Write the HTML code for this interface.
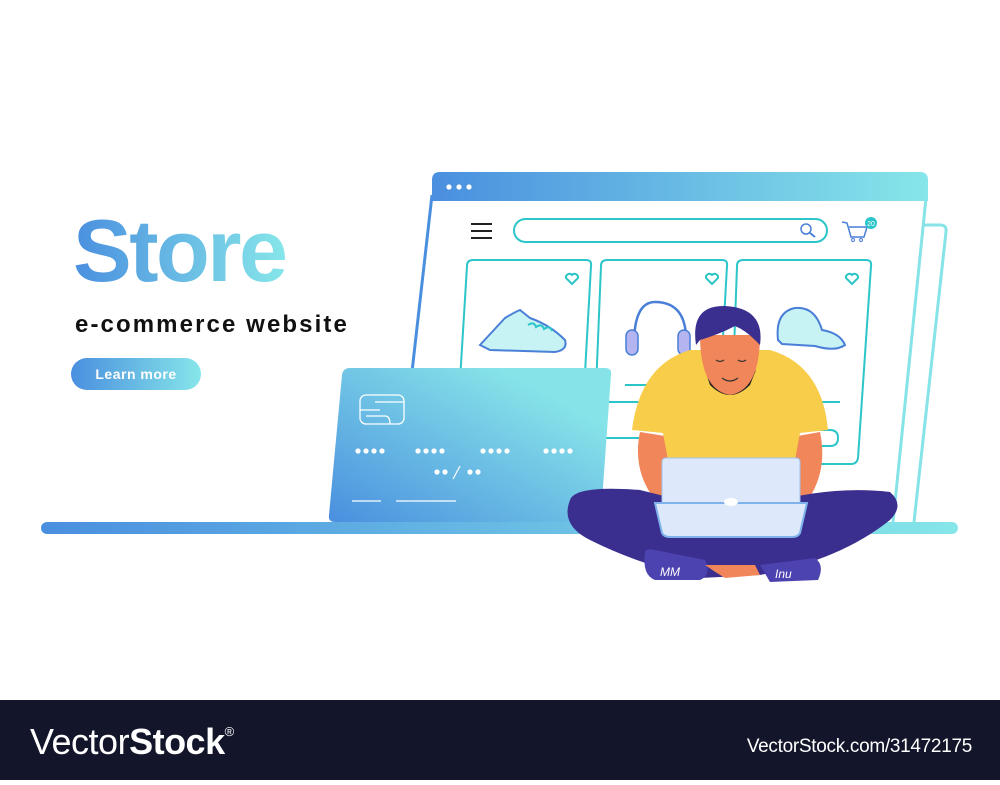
<!DOCTYPE html>
<html><head><style>
body{margin:0;width:1000px;height:780px;overflow:hidden;background:#fff;font-family:"Liberation Sans",sans-serif}
</style></head><body>
<svg width="1000" height="780" viewBox="0 0 1000 780" xmlns="http://www.w3.org/2000/svg">
<defs>
<linearGradient id="g1" x1="0" x2="1" y1="0" y2="0"><stop offset="0" stop-color="#4a8fdf"/><stop offset="1" stop-color="#86e6e9"/></linearGradient>
<linearGradient id="g2" x1="0" x2="1" y1="1" y2="0"><stop offset="0" stop-color="#4a8fdf"/><stop offset="0.8" stop-color="#86e3e8"/></linearGradient>
</defs>
<path d="M900 225 L940 225 Q947 225 946 232 L914 522" fill="#fff" stroke="#86e3e8" stroke-width="3"/>
<polygon points="432,200 926,200 893,522 396,522" fill="#fff"/>
<line x1="432" y1="195" x2="395" y2="522" stroke="#4a8fdf" stroke-width="3"/>
<line x1="926" y1="198" x2="893" y2="522" stroke="#86e3e8" stroke-width="3"/>
<path d="M440 172 H920 Q928 172 928 180 V201 H432 V180 Q432 172 440 172Z" fill="url(#g1)"/>
<circle cx="449" cy="187" r="2.6" fill="#fff"/><circle cx="459" cy="187" r="2.6" fill="#fff"/><circle cx="469" cy="187" r="2.6" fill="#fff"/>
<g stroke="#222" stroke-width="2"><line x1="471" y1="224" x2="492" y2="224"/><line x1="471" y1="231" x2="492" y2="231"/><line x1="471" y1="238" x2="492" y2="238"/></g>
<rect x="514" y="219" width="313" height="23" rx="11.5" fill="none" stroke="#2cc5c9" stroke-width="2"/>
<circle cx="806" cy="229" r="5" fill="none" stroke="#4a7fd8" stroke-width="1.5"/><line x1="810" y1="233" x2="815" y2="237" stroke="#4a7fd8" stroke-width="2"/>
<path d="M842 222 L847 223 L851 237 H864 L867 227 H849" fill="none" stroke="#4a7fd8" stroke-width="1.5"/>
<circle cx="853" cy="240" r="1.5" fill="none" stroke="#4a7fd8"/><circle cx="861" cy="240" r="1.5" fill="none" stroke="#4a7fd8"/>
<circle cx="871" cy="223" r="6" fill="#2cc5c9"/><text x="871" y="226" font-size="7" fill="#fff" text-anchor="middle">20</text>
<g fill="none" stroke="#2cc5c9" stroke-width="2">
<path d="M455 462 L467 266 Q467 260 473 260 H586 Q592 260 591 266 L580 462"/>
<path d="M593 462 L601 266 Q601 260 607 260 H722 Q728 260 727 266 L716 462"/>
<path d="M730 462 L737 266 Q737 260 743 260 H866 Q872 260 871 266 L858 458 Q857 464 851 464 H735"/>
<line x1="625" y1="385" x2="700" y2="385"/><line x1="760" y1="385" x2="812" y2="385"/>
<line x1="600" y1="402" x2="700" y2="402"/><line x1="760" y1="402" x2="840" y2="402"/>
<line x1="598" y1="438" x2="640" y2="438"/><path d="M820 430 h10 q8 0 8 8 q0 8 -8 8 h-10"/>
<path d="M572 284 l-6 -6 a3.5 3.5 0 0 1 6 -3 a3.5 3.5 0 0 1 6 3z"/>
<path d="M712 284 l-6 -6 a3.5 3.5 0 0 1 6 -3 a3.5 3.5 0 0 1 6 3z"/>
<path d="M852 284 l-6 -6 a3.5 3.5 0 0 1 6 -3 a3.5 3.5 0 0 1 6 3z"/>
</g>
<path d="M480 345 L505 318 Q515 312 520 310 L530 318 Q550 325 565 340 Q568 350 555 352 L490 350 Z" fill="#c8f3f5" stroke="#4a7fd8" stroke-width="2"/>
<path d="M528 325 q6 -4 8 2 q6 -4 8 2 q6 -4 8 2" fill="none" stroke="#2cc5c9" stroke-width="2"/>
<path d="M634 345 Q634 302 655 302 Q688 302 686 345" fill="none" stroke="#4a7fd8" stroke-width="2.5"/>
<rect x="626" y="330" width="12" height="25" rx="6" fill="#b3b4f0" stroke="#4a7fd8" stroke-width="1.5"/>
<rect x="678" y="330" width="12" height="25" rx="6" fill="#b3b4f0" stroke="#4a7fd8" stroke-width="1.5"/>
<path d="M778 340 Q775 312 795 308 Q815 306 822 330 Q840 333 845 345 Q835 352 815 346 L782 344 Z" fill="#c8f3f5" stroke="#4a7fd8" stroke-width="2"/>
<rect x="41" y="522" width="917" height="12" rx="6" fill="url(#g1)"/>
<path d="M350 368 H605 Q612 368 611 375 L601 515 Q600 522 593 522 H335 Q328 522 329 515 L342 375 Q343 368 350 368Z" fill="url(#g2)"/>
<rect x="360" y="395" width="44" height="29" rx="6" fill="none" stroke="#fff" stroke-width="1.3"/>
<path d="M360 410 H380 M375 402 H404 M366 416 H385 Q390 416 390 424" fill="none" stroke="#fff" stroke-width="1.3"/>
<g fill="#fff">
<circle cx="358" cy="451" r="2.6"/><circle cx="366" cy="451" r="2.6"/><circle cx="374" cy="451" r="2.6"/><circle cx="382" cy="451" r="2.6"/>
<circle cx="418" cy="451" r="2.6"/><circle cx="426" cy="451" r="2.6"/><circle cx="434" cy="451" r="2.6"/><circle cx="442" cy="451" r="2.6"/>
<circle cx="483" cy="451" r="2.6"/><circle cx="491" cy="451" r="2.6"/><circle cx="499" cy="451" r="2.6"/><circle cx="507" cy="451" r="2.6"/>
<circle cx="546" cy="451" r="2.6"/><circle cx="554" cy="451" r="2.6"/><circle cx="562" cy="451" r="2.6"/><circle cx="570" cy="451" r="2.6"/>
<circle cx="437" cy="472" r="2.6"/><circle cx="445" cy="472" r="2.6"/><circle cx="470" cy="472" r="2.6"/><circle cx="478" cy="472" r="2.6"/>
</g>
<line x1="453" y1="479" x2="460" y2="466" stroke="#fff" stroke-width="1.2"/>
<g stroke="#fff" stroke-width="1.3"><line x1="352" y1="501" x2="381" y2="501"/><line x1="396" y1="501" x2="456" y2="501"/></g>
<path d="M640 432 Q632 470 655 500 L690 500 L690 440Z" fill="#f0865a"/>
<path d="M820 432 Q828 470 808 500 L775 500 L775 440Z" fill="#f0865a"/>
<path d="M632 430 Q640 365 690 350 L770 350 Q822 365 828 430 L800 433 L795 460 H668 L663 433Z" fill="#f8cd4a"/>
<path d="M570 500 Q575 485 640 490 L700 505 L760 505 Q830 485 890 492 Q905 505 890 520 Q840 560 760 575 L700 578 Q640 565 590 540 Q560 525 570 500Z" fill="#3a2e8f"/>
<path d="M645 553 Q645 548 655 550 L705 560 Q712 575 700 580 L655 580 Q642 575 645 553Z" fill="#4d43b0"/>
<path d="M760 565 L815 558 Q825 565 818 580 L770 582Z" fill="#4d43b0"/>
<text x="660" y="576" font-size="12" fill="#fff" font-style="italic">MM</text>
<text x="775" y="578" font-size="12" fill="#fff" font-style="italic">Inu</text>
<path d="M705 565 Q715 572 725 578 L760 575 L755 565Z" fill="#f0865a"/>
<path d="M705 370 Q730 395 756 370 L750 385 Q730 405 710 385Z" fill="#222"/>
<path d="M700 335 Q700 390 730 395 Q760 390 760 335Z" fill="#f0865a"/>
<path d="M696 345 Q690 305 725 306 Q765 308 760 345 L755 340 Q745 330 735 326 Q720 334 700 340Z" fill="#3a2e8f"/>
<path d="M716 360 q4 3 8 0 M738 360 q4 3 8 0 M722 378 q8 6 16 0" fill="none" stroke="#333" stroke-width="1.2"/>
<path d="M662 462 Q662 458 666 458 H796 Q800 458 800 462 L800 505 H662Z" fill="#dde9fb" stroke="#9fc4ef"/>
<path d="M655 503 H807 L800 533 Q798 537 792 537 H670 Q664 537 662 533Z" fill="#dde9fb" stroke="#7fb2ea" stroke-width="2"/>
<ellipse cx="731" cy="502" rx="7" ry="4" fill="#fff"/>
<text x="73" y="281" font-size="88" font-weight="bold" fill="url(#g1)" letter-spacing="-2.5">Store</text>
<text x="75" y="332" font-size="24" font-weight="bold" fill="#111" letter-spacing="2.1">e-commerce website</text>
<rect x="71" y="358" width="130" height="32" rx="16" fill="url(#g1)"/>
<text x="136" y="379" font-size="14" font-weight="bold" fill="#fff" text-anchor="middle" letter-spacing="0.5">Learn more</text>
<rect x="0" y="700" width="1000" height="80" fill="#13152a"/>
<text x="30" y="754" font-size="36" fill="#fff" letter-spacing="-0.5">Vector<tspan font-weight="bold">Stock</tspan><tspan font-size="13" dy="-18">®</tspan></text>
<text x="972" y="752" font-size="19" fill="#fff" text-anchor="end" letter-spacing="-0.3">VectorStock.com/31472175</text>
</svg>
</body></html>
